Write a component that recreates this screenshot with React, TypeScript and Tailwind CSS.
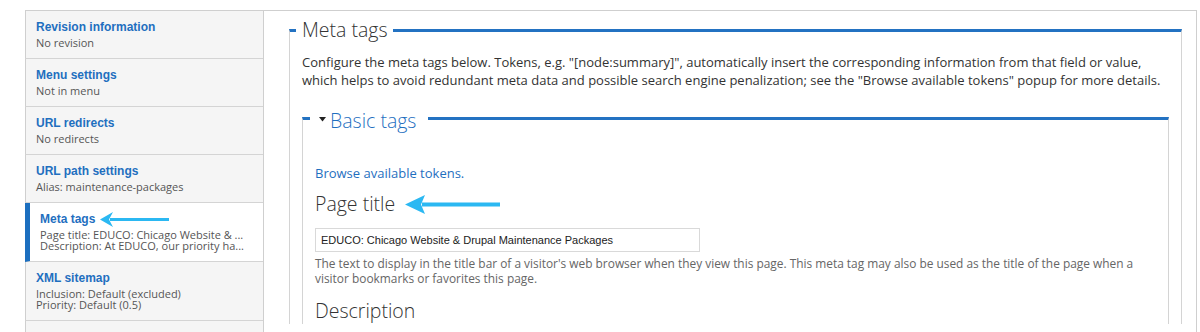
import React from "react";

const items = [
  { title: "Revision information", lines: ["No revision"] },
  { title: "Menu settings", lines: ["Not in menu"] },
  { title: "URL redirects", lines: ["No redirects"] },
  { title: "URL path settings", lines: ["Alias: maintenance-packages"] },
  {
    title: "Meta tags",
    lines: ["Page title: EDUCO: Chicago Website & ...", "Description: At EDUCO, our priority ha..."],
    active: true,
  },
  { title: "XML sitemap", lines: ["Inclusion: Default (excluded)", "Priority: Default (0.5)"] },
  { title: "Comment settings", lines: ["Open"] },
];

function Arrow({ x, y, w, head, hh, t }: { x: number; y: number; w: number; head: number; hh: number; t: number }) {
  return (
    <svg
      className="absolute pointer-events-none"
      style={{ left: x, top: y - hh / 2, width: w, height: hh }}
      viewBox={`0 0 ${w} ${hh}`}
    >
      <rect x={head - 3} y={hh / 2 - t / 2} width={w - head + 3} height={t} fill="#2bb8f2" />
      <path d={`M0 ${hh / 2} L${head} 0 L${head - 4} ${hh / 2} L${head} ${hh} Z`} fill="#2bb8f2" />
    </svg>
  );
}

export default function App() {
  return (
    <div className="relative w-[1200px] h-[332px] overflow-hidden bg-white font-['Open_Sans',sans-serif] text-[#333]">
      <div className="flex pt-[10px] pl-[25px]">
        {/* Sidebar */}
        <div className="w-[238px] shrink-0 flex flex-col border-t border-[#cfcfcf] bg-[#f5f5f5]">
          {items.map((it, i) => (
            <div
              key={i}
              className={
                it.active
                  ? "bg-white border-l-[5px] border-l-[#1c6fbf] border-b border-b-[#d4d4d4] pl-[10px] pt-[9px] pb-[10px]"
                  : "border-l border-l-[#cfcfcf] border-b border-b-[#d4d4d4] pl-[10px] pt-[9px] pb-[10px]"
              }
            >
              <div className="font-['Liberation_Sans',Arial,sans-serif] font-bold text-[12px] leading-[15px] text-[#1f6fbf]">
                {it.title}
              </div>
              <div className="mt-[2px] text-[11px] leading-[11px] text-[#555] whitespace-nowrap">
                {it.lines.map((l, j) => (
                  <div key={j}>{l}</div>
                ))}
              </div>
            </div>
          ))}
        </div>

        {/* Main panel */}
        <div className="w-[934px] shrink-0 h-[400px] border-t border-l border-r border-[#cfcfcf] bg-white pl-[25px] pr-[14px] pt-[5px]">
          <fieldset className="border-x border-x-[#d4d4d4] border-t-[3px] border-t-[#2372c2]">
            <legend className="ml-[6px] pl-[6px] pr-[5px] text-[19.5px] font-light leading-[28px] text-[#333]">
              Meta tags
            </legend>
            <div className="px-[12px]">
              <p className="mt-[9px] text-[13px] leading-[18px] text-[#333]">
                Configure the meta tags below. Tokens, e.g. "[node:summary]", automatically insert the corresponding
                information from that field or value, which helps to avoid redundant meta data and possible search
                engine penalization; see the "Browse available tokens" popup for more details.
              </p>

              <fieldset className="mt-[12px] border-x border-x-[#d4d4d4] border-t-[3px] border-t-[#2372c2]">
                <legend className="ml-[7px] pl-[9px] pr-[12px] text-[19.5px] font-light leading-[28px] text-[#1f6fbf]">
                  <span className="inline-flex items-center gap-[4px]">
                    <svg width="7" height="5" viewBox="0 0 7 5" className="mb-[3px]">
                      <path d="M0 0 L7 0 L3.5 4.5 Z" fill="#222" />
                    </svg>
                    <span>Basic tags</span>
                  </span>
                </legend>
                <div className="px-[12px] pt-[29px]">
                  <a className="block text-[13px] leading-[18px] text-[#1f6fbf]">Browse available tokens.</a>
                  <div className="mt-[9px] text-[19.5px] font-light leading-[26px] text-[#333]">Page title</div>
                  <div className="mt-[11px] w-[385px] h-[24px] border border-[#d9d9d9] bg-white pl-[5px] flex items-center font-['Liberation_Sans',Arial,sans-serif] text-[11px] text-[#222]">
                    EDUCO: Chicago Website &amp; Drupal Maintenance Packages
                  </div>
                  <p className="mt-[4px] text-[11.9px] leading-[15px] text-[#666]">
                    The text to display in the title bar of a visitor's web browser when they view this page. This meta
                    tag may also be used as the title of the page when a visitor bookmarks or favorites this page.
                  </p>
                  <div className="mt-[12px] text-[19.5px] font-light leading-[26px] text-[#333]">Description</div>
                </div>
              </fieldset>
            </div>
          </fieldset>
        </div>
      </div>

      <Arrow x={100} y={219} w={69} head={13} hh={15} t={3} />
      <Arrow x={405} y={204} w={95} head={20} hh={19} t={4} />
    </div>
  );
}
